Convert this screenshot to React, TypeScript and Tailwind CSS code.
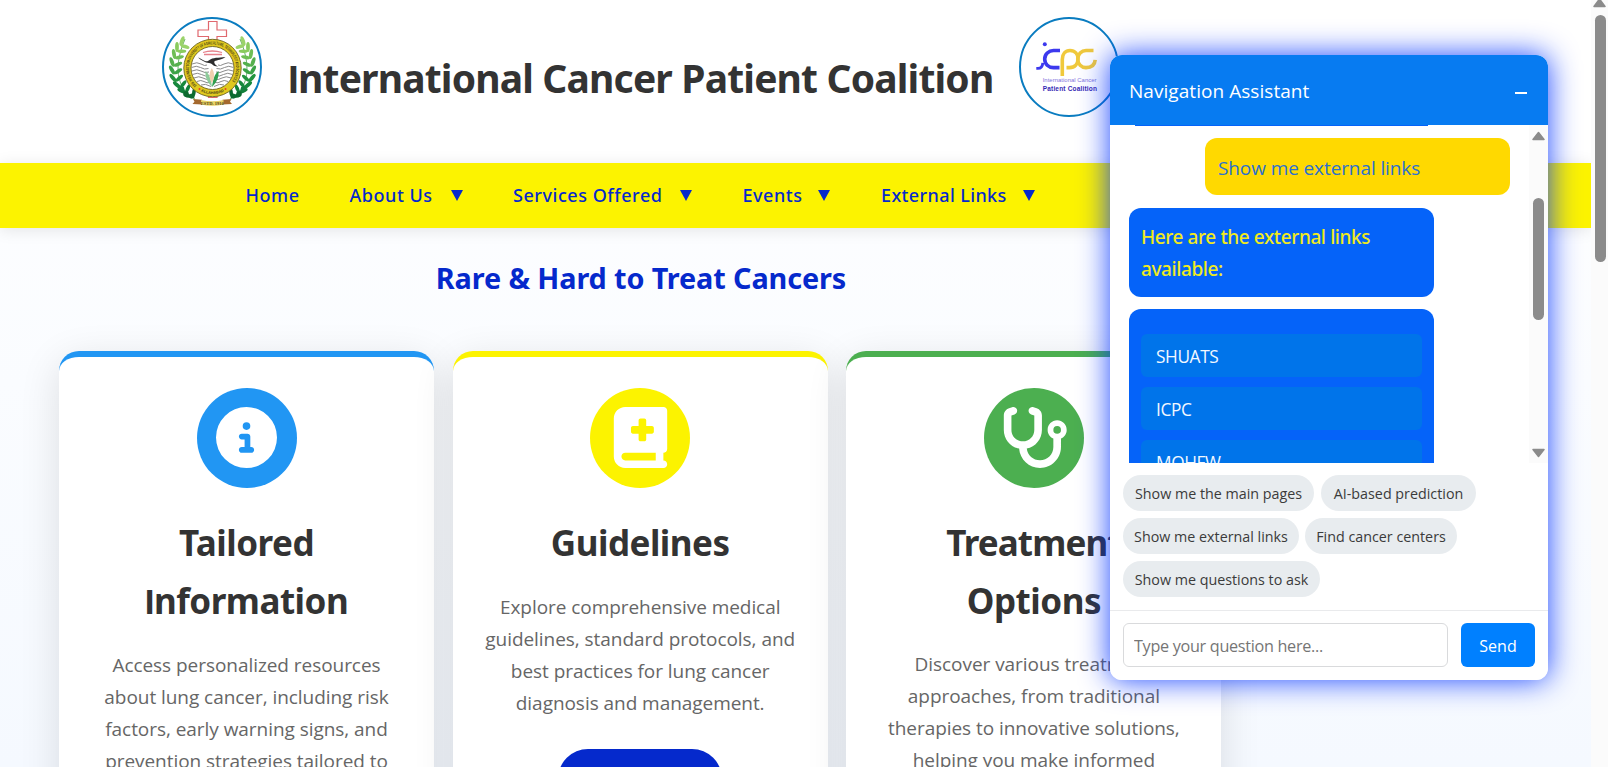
import type { ReactNode } from 'react';
import { FaBookMedical, FaCircleInfo, FaStethoscope } from 'react-icons/fa6';

const leaves = [
  { x: 27, y: 79, r: -20, c: '#0b6b2f' },
  { x: 20, y: 74, r: -5, c: '#12803a' },
  { x: 15, y: 68, r: 10, c: '#17883d' },
  { x: 11, y: 61, r: 20, c: '#23943f' },
  { x: 10, y: 53, r: 30, c: '#3ba347' },
  { x: 10, y: 45, r: 40, c: '#55b04e' },
  { x: 12, y: 37, r: 50, c: '#6fbe55' },
  { x: 15, y: 30, r: 60, c: '#8acb5e' },
  { x: 20, y: 24, r: 80, c: '#9bd36a' },
];

function Branch() {
  return (
    <g>
      <path d="M33 82 C18 74 9 55 23 22" fill="none" stroke="#3f9a45" strokeWidth="0.8" />
      {leaves.map((l) => (
        <g key={l.y} fill={l.c} transform={`translate(${l.x} ${l.y}) rotate(${l.r})`}>
          <ellipse cx="0" cy="0" rx="5" ry="1.9" transform="rotate(30)" />
          <ellipse cx="6" cy="-2" rx="4.6" ry="1.8" transform="rotate(-62 6 -2)" />
        </g>
      ))}
      <circle cx="24" cy="77" r="2.8" fill="#0d6a30" />
      <circle cx="30" cy="79" r="2.6" fill="#0d6a30" />
      <circle cx="20" cy="72" r="2.4" fill="#158040" />
    </g>
  );
}

function UniversityLogo() {
  return (
    <svg viewBox="0 0 100 100" className="size-[100px] shrink-0">
      <circle cx="50" cy="50" r="49" fill="#fff" stroke="#0a7cc0" strokeWidth="2" />
      <path
        d="M46.5 4.500h8.500v8.500h9.500v6.500h-9.500v61h-8.500v-61h-10.500v-6.500h10.500z"
        fill="#fff"
        stroke="#e0686e"
        strokeWidth="1.200"
      />
      <Branch />
      <g transform="matrix(-1 0 0 1 101 0)">
        <Branch />
      </g>
      <circle cx="50.500" cy="51" r="28.700" fill="#e0c81f" stroke="#6d6420" strokeWidth="0.900" />
      <circle cx="50.500" cy="51" r="21.500" fill="#fff" stroke="#6d6420" strokeWidth="0.900" />
      <defs>
        <path id="ring" d="M34.700 68.500 A23.600 23.600 0 1 1 66.300 68.500" />
        <path id="ringLow" d="M36 72.700 A26.200 26.200 0 0 0 65 72.700" />
      </defs>
      <text className="font-['Liberation_Sans'] text-[4.300px] font-bold" fill="#4a4315">
        <textPath href="#ring" textLength="107" lengthAdjust="spacingAndGlyphs">
          SAM HIGGINBOTTOM UNIVERSITY OF AGRICULTURE, TECHNOLOGY AND SCIENCES
        </textPath>
      </text>
      <text className="font-['Liberation_Sans'] text-[3.800px] font-bold" fill="#4a4315">
        <textPath href="#ringLow" startOffset="50%" textAnchor="middle">
          ALLAHABAD
        </textPath>
      </text>
      <circle cx="37.500" cy="72" r="1" fill="#e2461f" />
      <circle cx="63.500" cy="72" r="1" fill="#e2461f" />
      <g fill="none" stroke="#8b8b8b" strokeWidth="1">
        <path d="M30 47q5-2.500 9 0t6 1M71 47q-5-2.500-9 0t-6 1" />
        <path d="M29.500 50.500q5-2.500 9 0t8 1M71.500 50.500q-5-2.500-9 0t-8 1" />
        <path d="M30 54q5-2.500 9 0t8 1M71 54q-5-2.500-9 0t-8 1" />
        <path d="M30.500 57.500q5-2.500 9 0t8 1M70.500 57.500q-5-2.500-9 0t-8 1" />
        <path d="M32 61q5-2.500 9 0t7 1M69 61q-5-2.500-9 0t-7 1" />
        <path d="M35 64.500q4-2 7 0t6 1M66 64.500q-4-2-7 0t-6 1" />
        <path d="M39 68q4-2 10 1.500M62 68q-4-2-10 1.500" />
      </g>
      <path d="M41 35.500q9-3 19 0M42 37.500h18" fill="none" stroke="#e6808a" strokeWidth="1.300" />
      <path
        d="M36 40.500c2 0 4 2.500 7 3.500 2 .6 3 0 4.500-1 3-2.500 9-2.200 16-3-4 3-8 2.800-11 4.300-1 1.800 1.500 4.500 3.500 5.200-5 .2-6-3.500-9-3.500-4-.2-8-3-11-5.500z"
        fill="#2d2d2d"
      />
      <path d="M50 70c-5-5-7-10-6.500-16 4 3 5.500 8 6.500 16z" fill="#8ccb9a" />
      <path d="M50 70c5-5 7-10 6.500-16-4 3-5.500 8-6.500 16z" fill="#2f9e4e" />
      <path d="M49.800 66c-3-5-3-10 0-15 3 5 3 10 0 15z" fill="#f1cfae" />
      <path d="M31 82l9 .8v4.700l-9.500-.5 2-2.300zM69.500 82l-9 .8v4.700l9.500-.5-2-2.300z" fill="#a5692e" />
      <path d="M39 83q11.500 2.500 22.500 0v4.500q-11 2.500-22.500 0z" fill="#e8d264" />
      <text x="50.300" y="88" textAnchor="middle" className="font-['Liberation_Serif'] text-[4.500px] font-bold" fill="#51451a">
        ESTD. 1910
      </text>
    </svg>
  );
}

function CoalitionLogo() {
  return (
    <svg viewBox="0 0 100 100" className="size-[100px] shrink-0">
      <circle cx="50" cy="50" r="49" fill="#fff" stroke="#0a7cc0" strokeWidth="2" />
      <circle cx="25.800" cy="27.300" r="2" fill="#3c39ee" />
      <g fill="none" strokeWidth="3.600">
        <path d="M41 33.500h-6.500a8.800 8.500 0 0 0-8.800 8.500c0 5 3.800 8.600 8.800 8.600h6" stroke="#3c39ee" />
        <path d="M17.300 51.300h1.700c2.800 0 4.600-2.300 4.800-5.500" stroke="#3c39ee" strokeWidth="2.800" />
        <path
          d="M43.300 59v-16.500c0-5.500 3.200-9 7.700-9 5 0 8 3.600 8 8.300s-3 8.800-8.500 8.800h-3"
          stroke="#f0c93c"
        />
        <path d="M74.500 33.500h-7.500a8.300 8.500 0 0 0-8.300 8.500c0 5 3.800 8.600 8.300 8.600 5.800 0 8.800-3 9.200-7.800" stroke="#f0c93c" />
      </g>
      <text x="23.700" y="65.300" textLength="53.800" className="font-['Liberation_Sans'] text-[5.900px]" fill="#7f74dc">
        International Cancer
      </text>
      <text x="23.700" y="74.300" textLength="54.300" className="font-['Liberation_Sans'] text-[6.500px] font-bold" fill="#3629b4">
        Patient Coalition
      </text>
    </svg>
  );
}

/** Narrow capital used at the start of bold headings. */
function CapI() {
  return <span className="font-['Liberation_Sans']">I</span>;
}

function NavItem({ label, box, item }: { label: string; box: string; item: string }) {
  return (
    <li className={`flex shrink-0 items-center ${item}`}>
      <a className={`whitespace-nowrap ${box}`}>{label}</a>
      <svg viewBox="0 0 12 11" className="h-[11px] w-3 shrink-0" fill="#0529cc">
        <path d="M0 0h12L6 11z" />
      </svg>
    </li>
  );
}

function Card({
  border,
  circle,
  icon,
  title,
  lines,
  button,
}: {
  border: string;
  circle: string;
  icon: ReactNode;
  title: ReactNode;
  lines: string[];
  button?: boolean;
}) {
  return (
    <article
      className={`flex h-[560px] w-[375px] shrink-0 flex-col items-center rounded-[20px] border-t-[6px] bg-white pt-[31px] text-center shadow-[0_10px_40px_rgba(0,0,0,0.12)] ${border}`}
    >
      <div className={`flex size-[100px] shrink-0 items-center justify-center rounded-full pb-px text-[61px] text-white ${circle}`}>
        {icon}
      </div>
      <h3 className="mt-[26px] font-['Noto_Sans'] text-[35px] leading-[57.6px] font-bold tracking-[-0.5px] text-[#333]">
        {title}
      </h3>
      <p className="mt-[19px] text-[19px] leading-8 tracking-[-0.05px] whitespace-nowrap text-[#666]">
        {lines.map((l) => (
          <span key={l} className="block">
            {l}
          </span>
        ))}
      </p>
      {button && <div className="mt-[30px] h-[60px] w-[164px] shrink-0 rounded-[30px] bg-[#0529cc]" />}
    </article>
  );
}

function Chip({ children, w }: { children: string; w: string }) {
  return (
    <button
      className={`h-9 shrink-0 rounded-full bg-[#e8ecef] pt-px text-center text-[14.3px] whitespace-nowrap text-[#3b3b3b] ${w}`}
    >
      {children}
    </button>
  );
}

function LinkRow({ children }: { children: string }) {
  return (
    <a className="flex h-[43px] shrink-0 items-center rounded-md bg-[#0074ea] pt-0.5 pl-[15px] text-[17.3px] tracking-[-0.4px] text-[#f3f8ff]">
      {children}
    </a>
  );
}

function Assistant() {
  return (
    <aside className="absolute top-[55px] left-[1110px] flex h-[625px] w-[438px] flex-col overflow-hidden rounded-xl bg-white">
      <header className="flex h-[70px] shrink-0 items-center justify-between bg-[#077bf1] pr-[21px] pl-[19px] text-white">
        <span className="pt-0.5 text-[19px] tracking-[0.05px]">Navigation Assistant</span>
        <span className="mt-1.5 h-0.5 w-3 bg-white" />
      </header>
      <div className="flex h-[338px] shrink-0 overflow-hidden">
        <div className="flex w-[419px] shrink-0 flex-col overflow-hidden pl-[19px] text-[19px]">
          <div className="ml-1.5 h-px w-[293px] shrink-0 bg-[#0563f9]" />
          <div className="mt-3 ml-[76px] flex h-[57px] w-[305px] shrink-0 items-center rounded-xl bg-[#ffd900] pl-[13px] tracking-[-0.1px] text-[#2b70cf]">
            <span className="pt-1">Show me external links</span>
          </div>
          <div className="mt-[13px] h-[89px] w-[305px] shrink-0 rounded-xl bg-[#0563f9] px-3 pt-3 font-['Noto_Sans'] leading-8 font-medium tracking-[-0.4px] text-[#f0ea1d]">
            <span className="block pt-px whitespace-nowrap">Here are the external links</span>
            <span className="block">available:</span>
          </div>
          <div className="mt-3 flex h-[220px] w-[305px] shrink-0 flex-col gap-2.5 rounded-xl bg-[#0563f9] px-3 pt-[25px]">
            <LinkRow>SHUATS</LinkRow>
            <LinkRow>ICPC</LinkRow>
            <LinkRow>MOHFW</LinkRow>
          </div>
        </div>
        <div className="flex w-[19px] flex-col items-center bg-[#fbfbfb]">
          <svg viewBox="0 0 13 10" className="mt-1.5 h-2.5 w-[13px] shrink-0">
            <path d="M6.500 1.500L12 8.500H1z" fill="#8b8b8b" stroke="#8b8b8b" strokeWidth="1.500" strokeLinejoin="round" />
          </svg>
          <div className="mt-[57px] h-[122px] w-[11px] shrink-0 rounded-full bg-[#8b8b8b]" />
          <svg viewBox="0 0 13 10" className="mt-32 h-2.5 w-[13px] shrink-0">
            <path d="M6.500 8.500L12 1.500H1z" fill="#8b8b8b" stroke="#8b8b8b" strokeWidth="1.500" strokeLinejoin="round" />
          </svg>
        </div>
      </div>
      <div className="flex h-[148px] shrink-0 flex-col gap-[7px] border-b border-[#e9eaec] pt-3 pl-[13px]">
        <div className="flex gap-[7px]">
          <Chip w="w-[191px]">Show me the main pages</Chip>
          <Chip w="w-[155px]">AI-based prediction</Chip>
        </div>
        <div className="flex gap-[6px]">
          <Chip w="w-[176px]">Show me external links</Chip>
          <Chip w="w-[152px]">Find cancer centers</Chip>
        </div>
        <div className="flex">
          <Chip w="w-[197px]">Show me questions to ask</Chip>
        </div>
      </div>
      <form className="flex gap-[13px] pt-3 pl-[13px]">
        <input
          className="h-11 w-[325px] rounded-md border border-[#d9dadc] px-2.5 pt-0.5 text-[16.2px] tracking-[-0.3px] placeholder:text-[#757575]"
          placeholder="Type your question here..."
        />
        <button className="h-11 w-[74px] rounded-md bg-[#0080ff] pt-0.5 text-[16px] text-white">Send</button>
      </form>
    </aside>
  );
}

export default function App() {
  return (
    <div className="relative flex h-[767px] w-[1608px] overflow-hidden bg-white font-['Open_Sans','Noto_Sans',sans-serif]">
      <div className="flex h-full w-[1591px] shrink-0 flex-col overflow-hidden bg-linear-to-b from-white to-[#f5f9ff]">
        <header className="flex h-[163px] shrink-0 items-start bg-white pt-[17px] pl-[162px]">
          <UniversityLogo />
          <h1 className="mt-[29px] ml-[26px] w-[731px] shrink-0 font-['Noto_Sans'] text-[39px] leading-[64px] font-bold tracking-[-0.83px] whitespace-nowrap text-[#333]">
            <CapI />
            nternational Cancer Patient Coalition
          </h1>
          <CoalitionLogo />
        </header>
        <nav className="relative h-[65px] shrink-0 bg-[#fcf300] shadow-[0_2px_15px_rgba(0,0,0,0.1)]">
          <ul className="flex h-full items-center pl-[245.5px] font-['Noto_Sans'] text-[18px] font-medium tracking-[0.54px] text-[#0529cc]">
            <li className="w-[104px] shrink-0">Home</li>
            <NavItem label="About Us" box="w-[101.500px]" item="w-[163.500px]" />
            <NavItem label="Services Offered" box="w-[166.500px]" item="w-[229.500px]" />
            <NavItem label="Events" box="w-[75.500px]" item="w-[138.500px]" />
            <NavItem label="External Links" box="w-[141.500px] tracking-[0.38px]" item="w-[160px]" />
          </ul>
        </nav>
        <main className="flex flex-col items-start">
          <h2 className="mt-[27px] w-[1282px] text-center font-['Noto_Sans'] text-[28.8px] leading-[46px] font-bold tracking-[-0.1px] text-[#0529cc]">
            Rare &amp; Hard to Treat Cancers
          </h2>
          <section className="mt-[50px] flex gap-[18.7px] pl-[59px]">
            <Card
              border="border-[#2196f3]"
              circle="bg-[#2196f3]"
              icon={<FaCircleInfo />}
              title={
                <>
                  Tailored
                  <br />
                  <CapI />
                  nformation
                </>
              }
              lines={[
                'Access personalized resources',
                'about lung cancer, including risk',
                'factors, early warning signs, and',
                'prevention strategies tailored to',
              ]}
            />
            <Card
              border="border-[#fcf300]"
              circle="bg-[#fcf300]"
              icon={<FaBookMedical />}
              title="Guidelines"
              lines={[
                'Explore comprehensive medical',
                'guidelines, standard protocols, and',
                'best practices for lung cancer',
                'diagnosis and management.',
              ]}
              button
            />
            <Card
              border="border-[#4caf50]"
              circle="bg-[#4caf50]"
              icon={<FaStethoscope className="h-[61px] w-[68.6px]" />}
              title={
                <>
                  <span className="tracking-[-0.9px]">Treatment</span>
                  <br />
                  Options
                </>
              }
              lines={[
                'Discover various treatment',
                'approaches, from traditional',
                'therapies to innovative solutions,',
                'helping you make informed',
              ]}
            />
          </section>
        </main>
      </div>
      <div className="flex h-full w-[17px] shrink-0 flex-col items-center bg-[#fbfbfb]">
        <svg viewBox="0 0 13 8" className="h-2 w-[13px] shrink-0">
          <path d="M6.500 -1L12 6.500H1z" fill="#8b8b8b" stroke="#8b8b8b" strokeWidth="1.500" strokeLinejoin="round" />
        </svg>
        <div className="mt-[7px] ml-px h-[247px] w-[11px] rounded-full bg-[#8b8b8b]" />
      </div>
      <div className="absolute top-[55px] left-[1110px] h-[625px] w-[438px] rounded-xl shadow-[0_0_30px_rgba(0,50,255,0.9)]" />
      <Assistant />
    </div>
  );
}
